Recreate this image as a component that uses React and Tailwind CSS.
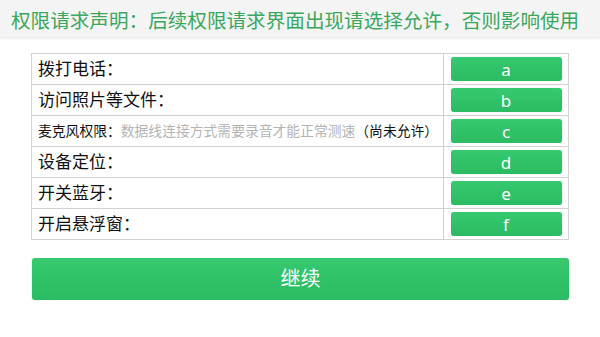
// 权限请求声明 — permission list with one green action per row and a "继续" button.

const rows = [
  { label: '拨打电话：', key: 'a' },
  { label: '访问照片等文件：', key: 'b' },
  { label: '麦克风权限：', key: 'c', note: '数据线连接方式需要录音才能正常测速', status: '（尚未允许）' },
  { label: '设备定位：', key: 'd' },
  { label: '开关蓝牙：', key: 'e' },
  { label: '开启悬浮窗：', key: 'f' },
]

function GreenButton({ children, className = '' }) {
  return (
    <button
      className={`rounded-[3px] bg-gradient-to-b from-[#36c96f] to-[#2bbb63] text-white shadow-[0_0_1px_rgba(0,0,0,0.25)] ${className}`}
    >
      {children}
    </button>
  )
}

export default function App() {
  return (
    <div
      className="h-[337px] w-[600px] bg-white"
      style={{ fontFamily: '"Noto Sans", "Noto Sans CJK SC", sans-serif' }}
    >
      <header className="flex h-[37px] items-center bg-[#f4f4f4] pl-[11px] pt-[5px] shadow-[0_1px_3px_rgba(0,0,0,0.12)]">
        <h1 className="whitespace-nowrap text-[19.6px] leading-none text-[#3aa75d]">
          权限请求声明：后续权限请求界面出现请选择允许，否则影响使用
        </h1>
      </header>

      <div className="ml-[31px] mt-[16px] w-[538px] border-t border-[#d2d2d2]">
        {rows.map((row) => (
          <div
            key={row.key}
            className="flex h-[31px] border-x border-b border-[#d2d2d2] text-[#111]"
          >
            <div className="flex flex-1 items-center whitespace-nowrap border-r border-[#d2d2d2] pl-[6px]">
              {row.note ? (
                <span className="text-[13.8px]">
                  {row.label}
                  <span className="text-[#b4b4b4]">{row.note}</span>
                  {row.status}
                </span>
              ) : (
                <span className="text-[17px]">{row.label}</span>
              )}
            </div>
            <div className="flex w-[124px] items-center justify-center">
              <GreenButton className="h-[24px] w-[111px] text-[17px] leading-none">{row.key}</GreenButton>
            </div>
          </div>
        ))}
      </div>

      <div className="ml-[32px] mt-[18px] w-[537px]">
        <GreenButton className="h-[42px] w-full text-[20px]">继续</GreenButton>
      </div>
    </div>
  )
}
